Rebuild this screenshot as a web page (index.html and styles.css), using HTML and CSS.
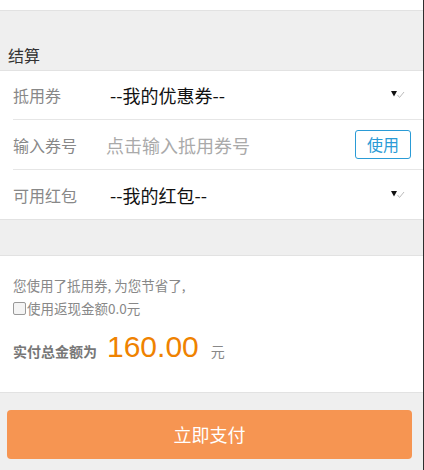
FILE: index.html
```html
<!DOCTYPE html>
<html lang="zh-CN">
<head>
<meta charset="utf-8">
<title>结算</title>
<link rel="stylesheet" href="styles.css">
</head>
<body>
<div class="page">
  <div class="top"></div>
  <div class="section-title">结算</div>
  <div class="card form">
    <div class="row first">
      <span class="label">抵用券</span>
      <div class="select"><span class="val">--我的优惠券--</span>
        <svg class="arrow" width="14" height="10" viewBox="0 0 14 10"><path d="M0 2 L6 2 L3 7.5 Z" fill="#111"/><path d="M6.5 6 L8.5 8.5 L13 3" fill="none" stroke="#bbb" stroke-width="1"/></svg>
      </div>
    </div>
    <div class="row">
      <span class="label">输入券号</span>
      <span class="placeholder">点击输入抵用券号</span>
      <span class="use-btn">使用</span>
    </div>
    <div class="row last">
      <span class="label">可用红包</span>
      <div class="select"><span class="val">--我的红包--</span>
        <svg class="arrow" width="14" height="10" viewBox="0 0 14 10"><path d="M0 2 L6 2 L3 7.5 Z" fill="#111"/><path d="M6.5 6 L8.5 8.5 L13 3" fill="none" stroke="#bbb" stroke-width="1"/></svg>
      </div>
    </div>
  </div>
  <div class="gap"></div>
  <div class="card summary">
    <p class="note">您使用了抵用券, 为您节省了,</p>
    <label class="check"><span class="box"></span>使用返现金额0.0元</label>
    <div class="total">
      <span class="total-label">实付总金额为</span>
      <span class="amount">160.00</span>
      <span class="unit">元</span>
    </div>
  </div>
  <div class="pay-wrap">
    <div class="pay-btn">立即支付</div>
  </div>
</div>
</body>
</html>
```
FILE: styles.css
```css
html, body {
  margin: 0;
  padding: 0;
  background: #efefef;
}
body {
  font-family: "Noto Sans CJK SC", "Liberation Sans", sans-serif;
}
.page {
  width: 423px;
  height: 470px;
  border-right: 1px solid #2e2e2e;
  background: #efefef;
  overflow: hidden;
}
.top {
  height: 10px;
  background: #fff;
  border-bottom: 1px solid #e2e2e2;
}
.section-title {
  height: 29px;
  padding: 29px 0 1px 8px;
  font-size: 16px;
  line-height: 20px;
  color: #333;
  display: flex;
  align-items: center;
}
.card {
  background: #fff;
  border-top: 1px solid #e2e2e2;
  border-bottom: 1px solid #e2e2e2;
}
.row {
  margin-left: 13px;
  height: 49px;
  border-bottom: 1px solid #e6e6e6;
  display: flex;
  align-items: center;
}
.row.first {
  height: 48px;
}
.row.last {
  border-bottom: none;
}
.label {
  width: 93px;
  flex: none;
  font-size: 16px;
  color: #888;
}
.select {
  flex: 1;
  display: flex;
  align-items: center;
  padding-left: 4px;
  padding-right: 18px;
}
.val {
  flex: 1;
  font-size: 18px;
  color: #111;
}
.arrow {
  flex: none;
  margin-top: -2px;
}
.placeholder {
  flex: 1;
  font-size: 18px;
  color: #aaa;
}
.use-btn {
  flex: none;
  width: 54px;
  height: 27px;
  margin-right: 12px;
  border: 1px solid #2a9bd6;
  border-radius: 3px;
  color: #2a9bd6;
  font-size: 16px;
  line-height: 27px;
  text-align: center;
}
.gap {
  height: 35px;
}
.summary {
  padding: 18px 0 25px 13px;
}
.note {
  margin: 0;
  font-size: 13.5px;
  line-height: 22px;
  color: #888;
}
.check {
  display: flex;
  align-items: center;
  height: 24px;
  font-size: 13.5px;
  color: #888;
}
.box {
  width: 11px;
  height: 11px;
  border: 1px solid #999;
  border-radius: 2px;
  background: #f4f4f4;
  margin-right: 1px;
}
.total {
  display: flex;
  align-items: baseline;
  margin-top: 7px;
  height: 40px;
  line-height: 40px;
}
.total-label {
  font-size: 14px;
  font-weight: bold;
  color: #777;
}
.amount {
  margin-left: 10px;
  font-family: "Liberation Sans", Arial, sans-serif;
  font-size: 30px;
  color: #ef8200;
}
.unit {
  margin-left: 12px;
  font-size: 14px;
  color: #888;
}
.pay-wrap {
  padding: 17px 11px 0 7px;
}
.pay-btn {
  height: 49px;
  border-radius: 4px;
  background: #f69552;
  color: #fff;
  font-size: 18px;
  line-height: 49px;
  text-align: center;
}
```
